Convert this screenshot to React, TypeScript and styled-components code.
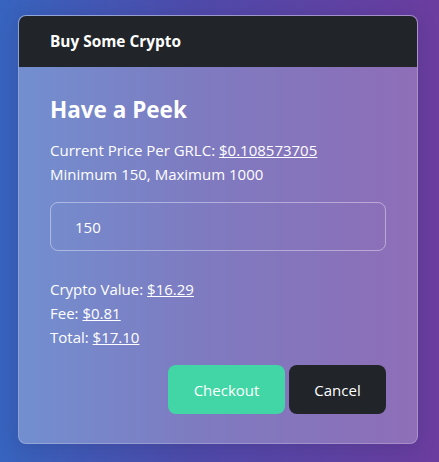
import React from "react";
import styled, { createGlobalStyle } from "styled-components";

const GlobalStyle = createGlobalStyle`
  html, body {
    margin: 0;
    padding: 0;
    width: 100%;
    height: 100%;
  }
  body {
    font-family: "Open Sans", "Noto Sans", sans-serif;
    background: linear-gradient(90deg, #3764be 0%, #4f4aaa 45%, #6b3d9f 100%);
    color: #fff;
  }
  #root { height: 100%; }
`;

const Page = styled.div`
  height: 462px;
  padding: 15px 21px 0 18px;
  box-sizing: border-box;
`;

const Card = styled.div`
  width: 400px;
  border-radius: 8px;
  overflow: hidden;
  border: 1px solid rgba(255, 255, 255, 0.22);
  box-sizing: border-box;
  background: linear-gradient(90deg, rgba(255, 255, 255, 0.29) 0%, rgba(255, 255, 255, 0.25) 100%);
  box-shadow: 0 4px 20px rgba(20, 20, 60, 0.15);
`;

const Header = styled.div`
  background: #212529;
  height: 52px;
  margin: -1px -1px 0;
  padding: 0 32px;
  display: flex;
  align-items: center;
  font-weight: 700;
  font-size: 15.4px;
`;

const Body = styled.div`
  padding: 28px 31px 29px;
  display: flex;
  flex-direction: column;
`;

const Title = styled.h4`
  margin: 0 0 14px;
  font-size: 22.5px;
  font-weight: 700;
  line-height: 29px;
`;

const Line = styled.div`
  font-size: 15px;
  line-height: 24px;
`;

const Link = styled.a`
  color: #fff;
  text-decoration: underline;
`;

const Input = styled.input`
  margin: 16px 0 26px;
  height: 49px;
  box-sizing: border-box;
  border: 1px solid rgba(255, 255, 255, 0.4);
  border-radius: 8px;
  background: transparent;
  color: #fff;
  font-family: inherit;
  font-size: 15px;
  padding: 0 24px;
  outline: none;
`;

const Actions = styled.div`
  display: flex;
  justify-content: flex-end;
  gap: 4px;
  margin-top: 16px;
`;

const Button = styled.button<{ $variant: "success" | "dark" }>`
  height: 49px;
  padding: 0 24px;
  border-radius: 8px;
  border: none;
  font-family: inherit;
  font-size: 15px;
  color: #fff;
  background: ${(p) => (p.$variant === "success" ? "#42d6a6" : "#212529")};
  cursor: pointer;
`;

export default function App() {
  return (
    <>
      <GlobalStyle />
      <Page>
        <Card>
          <Header>Buy Some Crypto</Header>
          <Body>
            <Title>Have a Peek</Title>
            <Line>
              Current Price Per GRLC: <Link href="#">$0.108573705</Link>
            </Line>
            <Line>Minimum 150, Maximum 1000</Line>
            <Input defaultValue="150" />
            <Line>
              Crypto Value: <Link href="#">$16.29</Link>
            </Line>
            <Line>
              Fee: <Link href="#">$0.81</Link>
            </Line>
            <Line>
              Total: <Link href="#">$17.10</Link>
            </Line>
            <Actions>
              <Button $variant="success" style={{ width: 117 }}>Checkout</Button>
              <Button $variant="dark" style={{ width: 97 }}>Cancel</Button>
            </Actions>
          </Body>
        </Card>
      </Page>
    </>
  );
}
